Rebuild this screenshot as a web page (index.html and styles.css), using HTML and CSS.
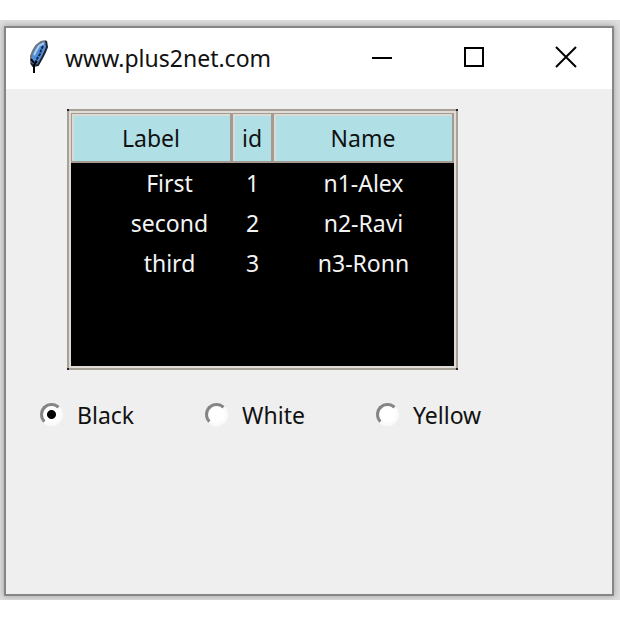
FILE: index.html
```
<!DOCTYPE html>
<html lang="en">
<head>
	<meta charset="UTF-8">
	<title>www.plus2net.com</title>
	<link rel="stylesheet" href="styles.css">
</head>
<body>
	<div class="desktop">
		<main class="window">
			<header class="titlebar">
				<svg class="feather" viewBox="0 0 20 34" width="20" height="34" aria-hidden="true">
					<path d="M18 1L13 2L8 6L5 11L3 16L3 23L5 26L10 25L14 18L17 12L19 7Z" fill="#4f8fda"/>
					<path d="M18 1L13 2L8 6L5 11L3 16V23" fill="none" stroke="#6f7780" stroke-width="2"/>
					<path d="M18 1L19 7L17 12L14 18L10 25L5 26L3 23" fill="none" stroke="#1c242e" stroke-width="2"/>
					<path d="M16 3L11 6L8 11L6 15" fill="none" stroke="#a9cdf2" stroke-width="2"/>
					<path d="M15 6L13 10L12 14L10 17L7 23" fill="none" stroke="#14294a" stroke-width="2" stroke-dasharray="3 1"/>
					<path d="M3 19L6 23M9 21L6 25V33" fill="none" stroke="#000" stroke-width="2"/>
				</svg>
				<h1 class="title">www.plus2net.com</h1>
				<div class="controls">
					<button type="button" aria-label="Minimize"><svg viewBox="0 0 22 22" width="22" height="22"><path d="M1 12H21"/></svg></button>
					<button type="button" aria-label="Maximize"><svg viewBox="0 0 22 22" width="22" height="22"><path d="M2 2H20V20H2Z"/></svg></button>
					<button type="button" aria-label="Close"><svg viewBox="0 0 22 22" width="22" height="22"><path d="M1 1L21 21M21 1L1 21"/></svg></button>
				</div>
			</header>
			<div class="client">
				<div class="tree">
					<div class="tree_view">
						<table>
							<colgroup><col class="col_label"><col class="col_id"><col class="col_name"></colgroup>
							<thead>
								<tr><th>Label</th><th>id</th><th>Name</th></tr>
							</thead>
							<tbody>
								<tr><td>First</td><td>1</td><td>n1-Alex</td></tr>
								<tr><td>second</td><td>2</td><td>n2-Ravi</td></tr>
								<tr><td>third</td><td>3</td><td>n3-Ronn</td></tr>
							</tbody>
						</table>
					</div>
				</div>
				<form class="colors">
					<label><input type="radio" name="color" value="black" checked>Black</label>
					<label><input type="radio" name="color" value="white">White</label>
					<label><input type="radio" name="color" value="yellow">Yellow</label>
				</form>
			</div>
		</main>
	</div>
</body>
</html>
```
FILE: styles.css
```
*{box-sizing: border-box;}
body{margin:0;min-height:100vh;padding:20px 0;display:flex;background:#fff;font-family:"Segoe UI","Noto Sans","Open Sans",sans-serif;font-size:23px;line-height:32px;color:#111;}
.desktop{flex:1;display:flex;padding:6px 6px 4px 4px;background:#ddd;overflow:hidden;}
.window{flex:1;display:flex;flex-direction:column;border:2px solid #868686;background:#efefef;box-shadow:0 0 6px rgba(0,0,0,.3);}

.titlebar{display:flex;align-items:center;height:61px;padding:0 35px 2px 22px;background:#fff;}
.feather{flex:none;margin-bottom:2px;}
.title{margin:0 0 0 17px;font-size:23px;font-weight:normal;}
.controls{display:flex;gap:70px;margin-left:auto;padding-bottom:2px;}
.controls button{display:flex;padding:0;border:none;background:none;}
.controls svg{fill:none;stroke:#000;stroke-width:2;}

.client{flex:1;padding:20px 34px;}
/* dark pixel on each corner of the frame */
.tree{
	width:fit-content;margin-left:27px;padding:2px;
	background:
		linear-gradient(#222,#222) 0 0/2px 2px no-repeat,
		linear-gradient(#222,#222) 100% 0/2px 2px no-repeat,
		linear-gradient(#222,#222) 0 100%/2px 2px no-repeat,
		linear-gradient(#222,#222) 100% 100%/2px 2px no-repeat,
		#a8a197;
}
.tree_view{min-height:257px;border:2px solid #e0dcd5;background:#000;}
table{border-collapse:separate;border-spacing:0;table-layout:fixed;width:383px;}
.col_label{width:161px;}
.col_id{width:41px;}
th{height:50px;padding:0;border:1px solid #a39b91;border-width:1px 2px 2px 1px;background:#b0e0e6;box-shadow:inset 2px 2px #dcdad5;font-weight:normal;}
td{height:40px;padding:0;color:#f4f4f4;text-align:center;}
/* room for the tree indicator */
td:first-child{padding-left:36px;}

.colors{display:flex;flex-wrap:wrap;gap:16px 71px;margin-top:29px;}
.colors label{display:flex;align-items:center;gap:14px;}
.colors input{appearance:none;width:23px;height:23px;margin:0 0 2px;border:3px solid;border-color:#858585 #fafafa #fafafa #858585;border-radius:50%;background:#fff;}
.colors input:checked{background:radial-gradient(circle,#000 4px,#fff 5px);}
```
